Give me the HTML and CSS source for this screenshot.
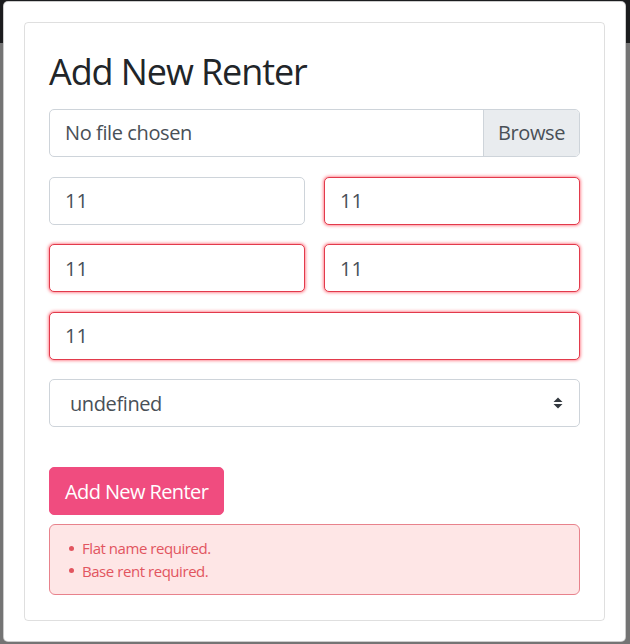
FILE: index.html
```html
<!DOCTYPE html>
<html lang="en">
<head>
<meta charset="utf-8">
<title>Add New Renter</title>
<link rel="stylesheet" href="styles.css">
</head>
<body>
<div class="page">
  <header class="navbar"></header>
  <main class="page-body"></main>
</div>
<div class="modal">
  <div class="card">
    <h1 class="title">Add New Renter</h1>
    <form class="form">
      <div class="file">
        <span class="file-label">No file chosen</span>
        <span class="file-btn">Browse</span>
      </div>
      <div class="row">
        <input class="field" type="text" value="11">
        <input class="field invalid" type="text" value="11">
      </div>
      <div class="row">
        <input class="field invalid" type="text" value="11">
        <input class="field invalid" type="text" value="11">
      </div>
      <input class="field invalid" type="text" value="11">
      <div class="select">
        <span>undefined</span>
        <svg class="caret" width="10" height="12" viewBox="0 0 10 12"><path d="M5 0.5 L9.5 5 H0.5 Z M5 11.5 L0.5 7 H9.5 Z" fill="#343a40"/></svg>
      </div>
    </form>
    <button class="btn" type="button">Add New Renter</button>
    <div class="alert">
      <ul class="errors">
        <li>Flat name required.</li>
        <li>Base rent required.</li>
      </ul>
    </div>
  </div>
</div>
</body>
</html>
```

FILE: styles.css
```css
* { box-sizing: border-box; }
html, body { margin: 0; padding: 0; }
body {
  width: 630px;
  height: 644px;
  overflow: hidden;
  font-family: "Open Sans", "Noto Sans", sans-serif;
  position: relative;
  background: #747474;
}
.page { display: flex; flex-direction: column; height: 644px; }
.navbar { height: 43px; background: #1b1c1e; }
.page-body { flex: 1; background: #747474; }

.modal {
  position: absolute;
  left: 3px;
  top: 1px;
  width: 623px;
  height: 641px;
  background: #fff;
  border: 1px solid rgba(0,0,0,.2);
  border-radius: 5px;
  padding: 20px;
}
.card {
  height: 599px;
  border: 1px solid rgba(0,0,0,.125);
  border-radius: 4px;
  padding: 24px;
  display: flex;
  flex-direction: column;
}
.title {
  margin: 0 0 12px;
  font-size: 36px;
  font-weight: 400;
  line-height: 50px;
  color: #212529;
  letter-spacing: -1.1px;
}
.form {
  display: flex;
  flex-direction: column;
  gap: 19.5px;
}
.file {
  height: 48px;
  display: flex;
  border: 1px solid #ced4da;
  border-radius: 5px;
  overflow: hidden;
  font-size: 20px;
  color: #495057;
  letter-spacing: -0.4px;
}
.file-label { flex: 1; padding: 0 15px; line-height: 46px; }
.file-btn {
  width: 96px;
  text-align: center;
  background: #e9ecef;
  border-left: 1px solid #ced4da;
  line-height: 46px;
}
.row {
  display: grid;
  grid-template-columns: 1fr 1fr;
  gap: 19px;
}
.field {
  display: block;
  width: 100%;
  height: 48px;
  margin: 0;
  padding: 0 15px;
  font-family: inherit;
  font-size: 20px;
  color: #495057;
  background: #fff;
  border: 1px solid #ced4da;
  border-radius: 5px;
  outline: none;
}
.field.invalid {
  border-color: #e23a4b;
  box-shadow: 0 0 3px 1px rgba(255, 30, 50, .5);
}
.select {
  height: 48px;
  display: flex;
  align-items: center;
  justify-content: space-between;
  padding: 0 16px 0 20px;
  border: 1px solid #ced4da;
  border-radius: 5px;
  font-size: 20px;
  color: #495057;
  letter-spacing: -0.4px;
}
.caret { display: block; }
.btn {
  align-self: flex-start;
  margin-top: 40px;
  height: 48px;
  padding: 0 15px;
  font-family: inherit;
  font-size: 20px;
  letter-spacing: -0.6px;
  color: #fff;
  background: #f04c7f;
  border: 1px solid #f04c7f;
  border-radius: 5px;
}
.alert {
  margin-top: 9px;
  padding: 12px 19px;
  background: #fee6e6;
  border: 1px solid #e8828c;
  border-radius: 6px;
  color: #e2555f;
  font-size: 15px;
  line-height: 22.5px;
}
.errors { list-style: none; margin: 0; padding: 0; }
.errors li { display: flex; align-items: center; gap: 8px; letter-spacing: -0.45px; }
.errors li::before {
  content: "";
  width: 5px;
  height: 5px;
  border-radius: 50%;
  background: #e2555f;
  flex: none;
}
```
